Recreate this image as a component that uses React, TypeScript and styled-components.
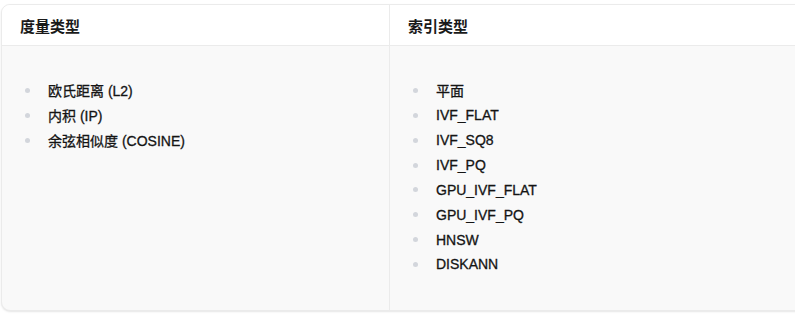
import React from 'react';
import styled, { createGlobalStyle } from 'styled-components';

const GlobalStyle = createGlobalStyle`
  html, body {
    margin: 0;
    padding: 0;
    background: #ffffff;
    overflow: hidden;
  }
  body {
    font-family: "Liberation Sans", "Noto Sans CJK SC", Arial, sans-serif;
    color: #1a1a1a;
  }
`;

const Page = styled.div`
  width: 795px;
  height: 316px;
  padding: 4px 0 0 1px;
  box-sizing: border-box;
  overflow: hidden;
`;

const Table = styled.div`
  width: 830px;
  display: grid;
  grid-template-columns: 387px 1fr;
  border: 1px solid #ebebeb;
  border-radius: 9px;
  overflow: hidden;
  background: #f9f9f9;
  box-shadow: 0 1px 2px rgba(0, 0, 0, 0.1);
`;

const HeadCell = styled.div<{ first?: boolean }>`
  height: 40px;
  display: flex;
  align-items: center;
  padding-left: 18px;
  background: #ffffff;
  border-bottom: 1px solid #ebebeb;
  border-left: ${p => (p.first ? 'none' : '1px solid #ebebeb')};
  font-size: 15px;
  font-weight: 700;
  color: #1a1a1a;
`;

const BodyCell = styled.div<{ first?: boolean }>`
  padding: 32px 0 33px 0;
  border-left: ${p => (p.first ? 'none' : '1px solid #ebebeb')};
`;

const List = styled.ul`
  list-style: none;
  margin: 0;
  padding: 0;
`;

const Item = styled.li`
  display: flex;
  align-items: center;
  height: 24.86px;
  font-size: 14px;
  color: #141414;
  -webkit-text-stroke: 0.3px #141414;
`;

const Bullet = styled.span`
  width: 5px;
  height: 5px;
  border-radius: 50%;
  background: #d3d6dc;
  margin-left: 23px;
  margin-right: 18px;
  flex-shrink: 0;
`;

const metrics = ['欧氏距离 (L2)', '内积 (IP)', '余弦相似度 (COSINE)'];
const indexes = ['平面', 'IVF_FLAT', 'IVF_SQ8', 'IVF_PQ', 'GPU_IVF_FLAT', 'GPU_IVF_PQ', 'HNSW', 'DISKANN'];

const App: React.FC = () => (
  <>
    <GlobalStyle />
    <Page>
      <Table>
        <HeadCell first>度量类型</HeadCell>
        <HeadCell>索引类型</HeadCell>
        <BodyCell first>
          <List>
            {metrics.map(m => (
              <Item key={m}>
                <Bullet />
                {m}
              </Item>
            ))}
          </List>
        </BodyCell>
        <BodyCell>
          <List>
            {indexes.map(i => (
              <Item key={i}>
                <Bullet />
                {i}
              </Item>
            ))}
          </List>
        </BodyCell>
      </Table>
    </Page>
  </>
);

export default App;
